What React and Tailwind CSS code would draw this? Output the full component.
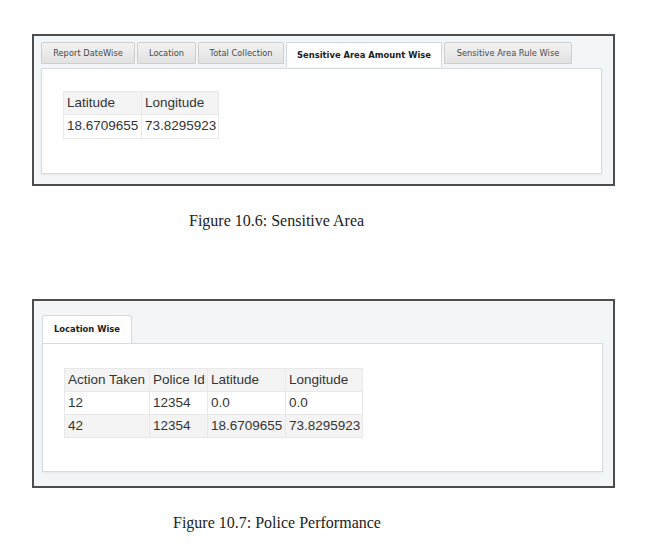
import React from "react";

const tabFont = { fontFamily: '"DejaVu Sans", Verdana, sans-serif' };
const tblFont = { fontFamily: '"Liberation Sans", Arial, sans-serif' };
const capFont = { fontFamily: '"Liberation Serif", "Times New Roman", serif' };

function Tab({ label, active, w }) {
  if (active) {
    return (
      <div
        className="h-[25px] flex items-start pt-[6px] justify-center whitespace-nowrap bg-white border border-b-0 border-[#d3d8de] rounded-t-[2px] text-[8.4px] font-bold text-[#222]"
        style={{ ...tabFont, width: w }}
      >
        {label}
      </div>
    );
  }
  return (
    <div
      className="h-[22px] flex items-center justify-center whitespace-nowrap bg-gradient-to-b from-[#f2f2f2] to-[#e2e2e2] border border-[#cfcfcf] rounded-t-[2px] text-[8.3px] text-[#4a4a4a]"
      style={{ ...tabFont, width: w }}
    >
      {label}
    </div>
  );
}

const td = "border border-[#e8e8e8] h-[23px] pl-[3px] pr-[2px] whitespace-nowrap";

export default function App() {
  return (
    <div className="w-[647px] h-[555px] bg-white flex flex-col">
      {/* Figure 10.6 */}
      <div className="mt-[34px] ml-[32px] w-[583px] h-[152px] border-2 border-[#4d4d4d] bg-[#f3f6f9] pt-[6px] pl-[7px] pr-[11px] pb-[10px] flex flex-col">
        <div className="flex items-start gap-[2px] h-[26px]">
          <Tab label="Report DateWise" w={94} />
          <Tab label="Location" w={59} />
          <Tab label="Total Collection" w={86} />
          <Tab label="Sensitive Area Amount Wise" w={156} active />
          <Tab label="Sensitive Area Rule Wise" w={128} />
        </div>
        <div className="flex-1 bg-white border border-[#d6dce2] shadow-[0_1px_2px_rgba(0,0,0,0.06)] pt-[22px] pl-[21px]">
          <table className="border-collapse text-[13.5px] text-[#333]" style={tblFont}>
            <tbody>
              <tr className="bg-[#f4f4f4]">
                <td className={td + " w-[78px]"}>Latitude</td>
                <td className={td}>Longitude</td>
              </tr>
              <tr className="bg-white">
                <td className={td + " h-[24px]"}>18.6709655</td>
                <td className={td + " h-[24px]"}>73.8295923</td>
              </tr>
            </tbody>
          </table>
        </div>
      </div>

      <div className="mt-[26px] ml-[189px] text-[16px] text-[#222] leading-[18px]" style={capFont}>
        Figure 10.6: Sensitive Area
      </div>

      {/* Figure 10.7 */}
      <div className="mt-[69px] ml-[32px] w-[583px] h-[189px] border-2 border-[#4d4d4d] bg-[#f3f6f9] pt-[14px] pl-[8px] pr-[10px] pb-[14px] flex flex-col">
        <div className="flex items-start h-[28px]">
          <div
            className="w-[90px] h-[28px] bg-white border border-b-0 border-[#d3d8de] rounded-t-[3px] flex items-center pl-[11px] whitespace-nowrap text-[8.4px] font-bold text-[#222]"
            style={tabFont}
          >
            Location Wise
          </div>
        </div>
        <div className="flex-1 bg-white border border-[#d6dce2] shadow-[0_1px_2px_rgba(0,0,0,0.06)] pt-[24px] pl-[21px]">
          <table className="border-collapse text-[13.5px] text-[#333]" style={tblFont}>
            <tbody>
              <tr className="bg-[#f4f4f4]">
                <td className={td + " w-[85px]"}>Action Taken</td>
                <td className={td + " w-[58px]"}>Police Id</td>
                <td className={td + " w-[78px]"}>Latitude</td>
                <td className={td}>Longitude</td>
              </tr>
              <tr className="bg-white">
                <td className={td}>12</td>
                <td className={td}>12354</td>
                <td className={td}>0.0</td>
                <td className={td}>0.0</td>
              </tr>
              <tr className="bg-[#f4f4f4]">
                <td className={td}>42</td>
                <td className={td}>12354</td>
                <td className={td}>18.6709655</td>
                <td className={td}>73.8295923</td>
              </tr>
            </tbody>
          </table>
        </div>
      </div>

      <div className="mt-[26px] ml-[173px] text-[16px] text-[#222] leading-[18px]" style={capFont}>
        Figure 10.7: Police Performance
      </div>
    </div>
  );
}
